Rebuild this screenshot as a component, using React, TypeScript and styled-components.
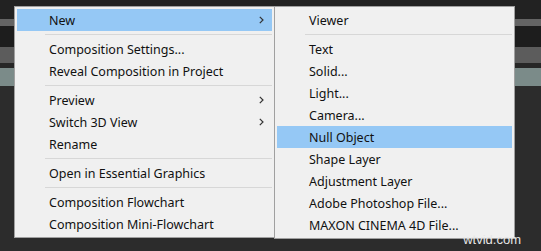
import React from "react";
import styled, { createGlobalStyle } from "styled-components";

const Global = createGlobalStyle`
  html, body { margin: 0; padding: 0; background: #2c2c2c; }
  #root { width: 541px; height: 251px; overflow: hidden; }
`;

const Page = styled.div`
  position: relative;
  width: 541px;
  height: 251px;
  display: flex;
  flex-direction: column;
  background: #2c2c2c;
  font-family: "Noto Sans", "Open Sans", sans-serif;
  overflow: hidden;
`;

const Band = styled.div<{ $h: number; $c: string }>`
  height: ${(p) => p.$h}px;
  background: ${(p) => p.$c};
  flex: none;
`;

const Menu = styled.div<{ $left: number; $width: number }>`
  position: absolute;
  top: 6px;
  left: ${(p) => p.$left}px;
  width: ${(p) => p.$width}px;
  box-sizing: border-box;
  padding: 2px;
  background: #f0f0f0;
  border: 1px solid #a0a0a0;
  display: flex;
  flex-direction: column;
`;

const Item = styled.div<{ $active?: boolean }>`
  height: 22px;
  display: flex;
  align-items: center;
  padding-left: 32px;
  padding-right: 8px;
  font-size: 12.5px;
  color: #111;
  background: ${(p) => (p.$active ? "#95c8f5" : "transparent")};
  white-space: nowrap;
`;

const Label = styled.span`
  flex: 1;
`;

const Sep = styled.div`
  height: 7px;
  display: flex;
  align-items: center;
  padding-left: 28px;
  &::after {
    content: "";
    flex: 1;
    height: 1px;
    background: #d7d7d7;
  }
`;

const Watermark = styled.div`
  position: absolute;
  right: 20px;
  bottom: 4px;
  font-family: "Liberation Sans", Arial, sans-serif;
  font-size: 13px;
  color: #e6e6e6;
`;

const Chevron = () => (
  <svg width="5" height="8" viewBox="0 0 5 8">
    <path d="M0.8 0.8 L4 4 L0.8 7.2" fill="none" stroke="#333" strokeWidth="1.2" />
  </svg>
);

type Entry = { label?: string; sub?: boolean; active?: boolean; sep?: boolean };

const left: Entry[] = [
  { label: "New", sub: true, active: true },
  { sep: true },
  { label: "Composition Settings..." },
  { label: "Reveal Composition in Project" },
  { sep: true },
  { label: "Preview", sub: true },
  { label: "Switch 3D View", sub: true },
  { label: "Rename" },
  { sep: true },
  { label: "Open in Essential Graphics" },
  { sep: true },
  { label: "Composition Flowchart" },
  { label: "Composition Mini-Flowchart" },
];

const right: Entry[] = [
  { label: "Viewer" },
  { sep: true },
  { label: "Text" },
  { label: "Solid..." },
  { label: "Light..." },
  { label: "Camera..." },
  { label: "Null Object", active: true },
  { label: "Shape Layer" },
  { label: "Adjustment Layer" },
  { label: "Adobe Photoshop File..." },
  { label: "MAXON CINEMA 4D File..." },
];

const renderEntries = (list: Entry[]) =>
  list.map((e, i) =>
    e.sep ? (
      <Sep key={i} />
    ) : (
      <Item key={i} $active={e.active}>
        <Label>{e.label}</Label>
        {e.sub && <Chevron />}
      </Item>
    )
  );

export default function App() {
  return (
    <>
      <Global />
      <Page>
        <Band $h={19} $c="#222222" />
        <Band $h={7} $c="#646464" />
        <Band $h={21} $c="#1d1d1d" />
        <Band $h={16} $c="#5c5c5c" />
        <Band $h={5} $c="#262626" />
        <Band $h={18} $c="#7b8b89" />
        <Band $h={165} $c="#2c2c2c" />
        <Menu $left={14} $width={261}>{renderEntries(left)}</Menu>
        <Menu $left={274} $width={241}>{renderEntries(right)}</Menu>
        <Watermark>wtvid.com</Watermark>
      </Page>
    </>
  );
}
